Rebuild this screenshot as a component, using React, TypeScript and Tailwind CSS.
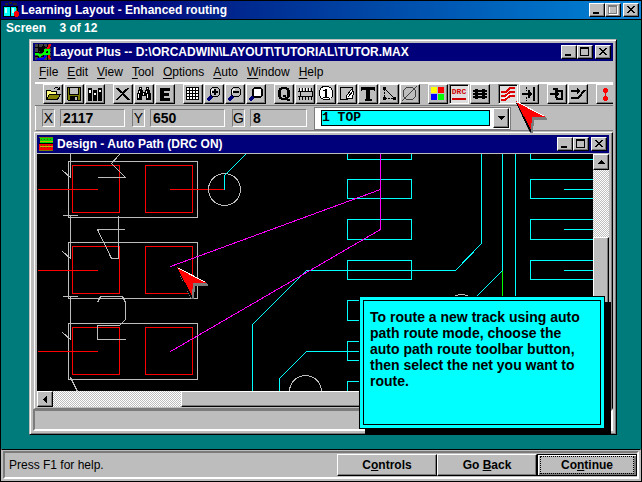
import type { ReactNode } from "react";

const raised =
  "border border-t-white border-l-white border-r-black border-b-black bg-[#bdbdbd] shadow-[inset_-1px_-1px_0_#7b7b7b]";
const pressed =
  "border border-t-[#7b7b7b] border-l-[#7b7b7b] border-r-white border-b-white bg-[#dedede] shadow-[inset_1px_1px_0_#000]";
const dither =
  "bg-[repeating-conic-gradient(#fff_0_25%,#bdbdbd_0_50%)] bg-[length:2px_2px]";

function WindowButtons({ dim = false }: { dim?: boolean }) {
  const cls = `h-[14px] w-4 ${raised}`;
  return (
    <div className="flex">
      <button aria-label="Minimize" className={cls}>
        <svg viewBox="0 0 14 12" className="block h-3 w-3.5" shapeRendering="crispEdges">
          <path d="M3 8h6v2H3z" />
        </svg>
      </button>
      <button aria-label="Maximize" className={cls}>
        <svg viewBox="0 0 14 12" className="block h-3 w-3.5" shapeRendering="crispEdges">
          {dim && <path d="M3.500 2.500h8v8h-8z" fill="none" stroke="#fff" />}
          <path d="M2.500 1.500h8v8h-8zM2 2.500h9" fill="none" stroke={dim ? "#7b7b7b" : "#000"} />
        </svg>
      </button>
      <button aria-label="Close" className={`ml-0.5 ${cls}`}>
        <svg viewBox="0 0 14 12" className="block h-3 w-3.5" shapeRendering="crispEdges">
          <path d="M3 2h2v1h1v1h2V3h1V2h2v1h-1v1H9v1H8v1h1v1h1v1h1v1H9V8H8V7H6v1H5v1H3V8h1V7h1V6h1V5H5V4H4V3H3z" />
        </svg>
      </button>
    </div>
  );
}

function Ico({ children }: { children: ReactNode }) {
  return (
    <svg viewBox="0 0 18 18" className="block h-[18px] w-[18px]" shapeRendering="crispEdges" fill="none" stroke="#000">
      {children}
    </svg>
  );
}

function Lens({ children }: { children?: ReactNode }) {
  return (
    <>
      <path d="M2.500 15.500l4-4" stroke="#00007b" strokeWidth="3" />
      <path d="M7.500 2.500h5l2 2v5l-2 2h-5l-2-2v-5z" fill="#bdbdbd" />
      <path d="M7 4.500h2M6.500 5v3" stroke="#fff" />
      {children}
    </>
  );
}

type Tool = { name: string; art: ReactNode; on?: boolean };

const groups: Tool[][] = [
  [
    {
      name: "Open",
      art: (
        <>
          <path d="M2.500 14.500v-9h4l1 1h5v3" fill="#ffff7b" />
          <path d="M2.500 14.500l3-5h11l-3 5z" fill="#848400" />
          <path d="M9.500 4.500l2-2h2l2 2M15.500 2v3M13 4.500h3" />
        </>
      ),
    },
    {
      name: "Save",
      art: (
        <>
          <path d="M2.500 2.500h13v13h-12l-1-1z" fill="#7b7b00" />
          <path d="M5 3h8v6H5z" fill="#bdbdbd" stroke="none" />
          <path d="M4.500 3v6.500h9V3" />
          <path d="M5 11h8v4H5z" fill="#000" stroke="none" />
          <path d="M10 12h2v3h-2z" fill="#bdbdbd" stroke="none" />
        </>
      ),
    },
    {
      name: "Library",
      art: (
        <>
          <path d="M2 3h4v13H2zM7 5h4v11H7zM12 3h4v13h-4z" fill="#000" stroke="none" />
          <path d="M3 5h2v3H3zM8 8h2v2H8zM13 5h2v2h-2z" fill="#fff" stroke="none" />
        </>
      ),
    },
  ],
  [
    {
      name: "Delete",
      art: <path d="M2 3h3v1h1v1h1v1h1v1h1V6h1V5h1V4h2V3h2v1h-1v1h-1v1h-1v1h-1v1h-1v1h1v1h1v1h1v1h1v1h1v1h1v1h-3v-1h-1v-1h-1v-1H10v-1H9v-1H8v1H7v1H6v1H5v1H4v1H2v-1h1v-1h1v-1h1v-1h1V10h1V9h1V8H6V7H5V6H4V5H3V4H2z" fill="#000" stroke="none" />,
    },
    {
      name: "Find",
      art: (
        <>
          <path d="M4 2h3v3h1v2h2V5h1V2h3v3h1v3h1v7h-5v-4H7v4H2V8h1V5h1z" fill="#000" stroke="none" />
          <path d="M4.500 6v2M3.500 9v4M11.500 6v2M12.500 9v4M5.500 3v1M12.500 3v1M8.500 8v2" stroke="#fff" />
        </>
      ),
    },
    { name: "Edit", art: <path d="M4 3h10v3H8v2h5v3H8v2h6v3H4z" fill="#000" stroke="none" /> },
  ],
  [
    {
      name: "Spreadsheet",
      art: (
        <>
          <path d="M2 2h13v13H2z" fill="#fff" stroke="none" />
          <path d="M2.500 2.500h12v12h-12zM2 5.500h13M2 8.500h13M2 11.500h13M5.500 2v13M8.500 2v13M11.500 2v13" />
        </>
      ),
    },
    { name: "Zoom in", art: <Lens><path d="M7 7h6M10 4v6" strokeWidth="2" /></Lens> },
    { name: "Zoom out", art: <Lens><path d="M7 7h6" strokeWidth="2" /></Lens> },
    {
      name: "Zoom all",
      art: (
        <Lens>
          <path d="M6.500 3.500h8v8h-8z" fill="#fff" />
          <path d="M7 2.500h7M5.500 4v7M15.500 4v7M7 12.500h7" />
        </Lens>
      ),
    },
  ],
  [
    {
      name: "Query",
      art: <path d="M6 2h6v1h2v2h1v7h-1v1h-1v1h2v2h-3v-1H6v-1H4v-2H3V5h1V3h2zM7 5H6v7h1v1h3v-1H8v-2h3v2h1V5h-1V4H7z" fill="#000" stroke="none" />,
    },
    {
      name: "Component",
      art: (
        <>
          <path d="M4 6.500h12v5H4v-1.500l1-1-1-1z" fill="#bdbdbd" />
          <path d="M3.500 3v3M6.500 3v3M9.500 3v3M12.500 3v3M15.500 3v3M3.500 12v3M6.500 12v3M9.500 12v3M12.500 12v3M15.500 12v3" />
          <path d="M2 6.500h3M2 11.500h3" />
          <path d="M4.500 3v3M7.500 3v3M10.500 3v3M13.500 3v3" stroke="#fff" />
        </>
      ),
    },
    {
      name: "Pin",
      art: (
        <>
          <path d="M6.500 1.500h5l3 2 1 3v5l-2 2-2 1h-5l-3-2-1-3v-4l2-3z" fill="#fff" />
          <path d="M8 4h2v8h2v1H6v-1h2V6H6V5h2z" fill="#000" stroke="none" />
        </>
      ),
    },
    {
      name: "Obstacle",
      art: (
        <>
          <path d="M2.500 2.500h12v5l-6 7h-6z" fill="#bdbdbd" />
          <path d="M8.500 14.500v-4l5-6 2 2-1 7h-4z" fill="#fff" />
          <path d="M10 12l5-6" />
        </>
      ),
    },
    { name: "Text", art: <path d="M2 2h14v4h-1V5h-4v9h2v2H6v-2h1V5H3v1H2z" fill="#000" stroke="none" /> },
    {
      name: "Connection",
      art: (
        <>
          <path d="M4.500 4v8M5 13.500h9" strokeDasharray="2 1" />
          <path d="M5 4l9 9" />
          <path d="M3 2h3v3H3zM3 12h3v3H3zM13 12h3v3h-3z" fill="#000" stroke="none" />
        </>
      ),
    },
    {
      name: "Error",
      art: (
        <path d="M5.500 2.500h6l3 3v6l-3 3h-6l-3-3v-6zM1 16L16 1" stroke="#424242" />
      ),
    },
  ],
  [
    {
      name: "Color",
      art: (
        <g stroke="none">
          <path d="M2 2h6v6H2z" fill="#ff0" />
          <path d="M9 2h6v6H9z" fill="#f00" />
          <path d="M2 9h6v6H2z" fill="#00f" />
          <path d="M9 9h6v6H9z" fill="#0f0" />
        </g>
      ),
    },
    {
      name: "Online DRC",
      on: true,
      art: (
        <>
          <text x="9" y="9" textAnchor="middle" fill="#d00000" stroke="none" className="font-['Liberation_Mono',monospace] text-[8px] font-bold">
            DRC
          </text>
          <path d="M2 14h14" stroke="#d00000" strokeWidth="2" />
        </>
      ),
    },
    {
      name: "Reconnect",
      art: (
        <>
          <path d="M2 6h14M2 9h14M2 12h14" strokeWidth="2" />
          <path d="M4 4h3v10H4zM11 4h3v10h-3zM7 5h4v8H7z" fill="#000" stroke="none" />
          <path d="M7 7.500h4M7 10.500h4" stroke="#bdbdbd" />
        </>
      ),
    },
  ],
  [
    {
      name: "Auto path route",
      on: true,
      art: (
        <>
          <path d="M2 7h5l4-4h5M2 11h4l5-4h5M2 15h4l5-4h5" stroke="#e00000" strokeWidth="2" />
          <path d="M3 13h3l4-4h3" stroke="#fff" />
        </>
      ),
    },
    {
      name: "Shove track",
      art: (
        <>
          <path d="M6.500 2v4M6.500 12v4" strokeDasharray="2 1" />
          <path d="M2 9h9" strokeWidth="2" />
          <path d="M8 5h2v2h1v1h1v2h-1v1h-1v2H8zM13 2h2v14h-2z" fill="#000" stroke="none" />
        </>
      ),
    },
  ],
  [
    {
      name: "Edit segment",
      art: (
        <>
          <path d="M5 4h4v2h5v8H9v-2" strokeWidth="2" />
          <path d="M2 9h7" strokeWidth="2" />
          <path d="M7 5h2v2h1v1h1v2h-1v1H9v2H7z" fill="#000" stroke="none" />
        </>
      ),
    },
    {
      name: "Add track",
      art: (
        <>
          <path d="M2 6h7M2 13h7l7-8" strokeWidth="2" />
          <path d="M8 3h1v1h1v1h1v2h-1v1H9v1H8z" fill="#000" stroke="none" />
        </>
      ),
    },
  ],
  [
    {
      name: "Refresh",
      art: (
        <path d="M7 3h3v1h1v3h-1v1H9v3h1v1h1v3h-1v1H7v-1H6v-3h1v-1h1V8H7V7H6V4h1z" fill="#f00" stroke="none" />
      ),
    },
  ],
];

function Readout({ id, value, width }: { id: string; value: string; width: string }) {
  const box = "h-[18px] border border-t-[#7b7b7b] border-l-[#7b7b7b] border-r-white border-b-white bg-[#bdbdbd]";
  return (
    <div className="flex gap-[5px]">
      <label htmlFor={id} className={`w-[13px] text-center text-sm leading-4 ${box}`}>
        {id}
      </label>
      <input id={id} readOnly defaultValue={value} className={`px-0.5 text-sm leading-4 font-bold outline-none ${width} ${box}`} />
    </div>
  );
}

const padRows = [139, 179, 219, 260, 300, 341, 381];

function Board() {
  return (
    <svg viewBox="37 154 556 237" className="block h-[237px] w-[556px] shrink-0" shapeRendering="crispEdges" fill="none" role="img" aria-label="Board layout">
      <g transform="translate(.5 .5)">
        {[0, 81, 162].map((dy) => (
          <g key={dy}>
            <path d={`M68 ${161 + dy}h129v56h-129z`} stroke="#bdbdbd" />
            <path d={`M72 ${165 + dy}h47v47h-47zM145 ${165 + dy}h47v47h-47zM37 ${189 + dy}h60`} stroke="#f00" />
            <path d={`M70 ${134 + dy}v43l-8 -7M62 ${134 + dy}h15`} stroke="#bdbdbd" />
          </g>
        ))}
        <path d="M169 189h55" stroke="#f00" />
        <path
          d="M119 154l-8 9l14 14h-28M124 229h-27l14 29h7v-43M97 302l3-6h22l3 6v17l-6 6h-22v14h28M70 377l7 14"
          stroke="#bdbdbd"
        />
        <g stroke="#bdbdbd">
          <circle cx="224" cy="189" r="16" />
          <circle cx="305" cy="391" r="16" />
          <circle cx="461" cy="310" r="16" />
        </g>
        <g stroke="#0ff">
          {padRows.map((y, i) => (
            <path key={y} d={`M347 ${y}h64v${i % 2 ? 19 : 20}h-64zM600 ${y}h-70v${i % 2 ? 19 : 20}h70`} />
          ))}
          <path d="M563 189h40M563 229h40M563 270h40" />
          <path d="M224 189v-14l22-22M252 391v-67l54-54h149l26-27v-90M279 391v-13l27-27h80M502 153v117l-30 30M515 153v160" />
        </g>
        <path d="M502 270v40" stroke="#0f0" />
        <path d="M380 153v76l-210 122M380 189l-210 77" stroke="#f0f" />
      </g>
    </svg>
  );
}

function RedArrow({ place }: { place: string }) {
  return (
    <svg viewBox="0 0 34 34" className={`pointer-events-none absolute h-[34px] w-[34px] ${place}`} shapeRendering="crispEdges" aria-hidden="true">
      <path d="M1 2l31 15v2H19l-1 13h-3z" fill="#7b7b7b" />
      <path d="M0 0l15 31h1V17z" fill="#000" />
      <path d="M1 0l29 15v1H17l-1 13z" fill="#f00" />
      <path d="M2 1l27 14" stroke="#fff" fill="none" />
    </svg>
  );
}

export default function App() {
  return (
    <div className="flex min-h-screen flex-col border border-black bg-[#007b7b] font-['Liberation_Sans',Arial,sans-serif] text-xs text-black">
      <header className="flex h-[19px] items-center border-b border-black bg-linear-to-r from-[#00007b] from-20% to-[#1084d6] pr-0.5 pl-0.5">
        <svg viewBox="0 0 16 16" className="mr-0.5 h-4 w-4" shapeRendering="crispEdges" aria-hidden="true">
          <path d="M2 1h3v2H2zM6 0h3v2H6zM10 1h4v2h-4z" fill="#222" />
          <path d="M0 4h15v11H0z" fill="#000" />
          <path d="M1 5h6v9H1zM8 5h5v9H8z" fill="#0ff" />
          <path d="M2 6h2v5H2zM9 6h2v5H9z" fill="#bff" />
          <path d="M12 9h3v1h1v4h-1v1h-3v-1h-1v-4h1z" fill="#f00" />
          <path d="M13 6h1v3h-1z" fill="#7b7b00" />
        </svg>
        <h1 className="flex-1 font-bold text-white">Learning Layout - Enhanced routing</h1>
        <WindowButtons dim />
      </header>

      <main className="flex-1 pr-6 pl-7">
        <p className="-ml-[23px] h-[19px] leading-4 font-bold whitespace-pre text-white">Screen{"    "}3 of 12</p>

        <section className="relative border border-t-[#bdbdbd] border-r-black border-b-black border-l-[#bdbdbd] bg-[#bdbdbd] p-[3px] shadow-[inset_1px_1px_0_#fff,inset_-1px_-1px_0_#7b7b7b]">
          <div className="flex h-[18px] items-center bg-[#00007b] pr-0.5 pl-0.5">
            <svg viewBox="0 0 16 16" className="mr-0.5 h-4 w-4" shapeRendering="crispEdges" fill="none" aria-hidden="true">
              <path d="M0 0h16v16H0z" fill="#424242" />
              <path d="M0 3.500h16M0 8.500h16M0 12.500h16M3.500 0v16M8.500 0v16M12.500 0v16" stroke="#000" />
              <path d="M2 3h5l1-2 2 1v5l-4 2z" fill="#000" />
              <path d="M15.500 0l-3 5M13 10l2 5" stroke="#f00" strokeWidth="2" />
              <path d="M0 10h3l2 2 4-3" stroke="#0f0" strokeWidth="2" />
              <circle cx="12" cy="8" r="2.500" stroke="#0f0" strokeWidth="2" />
              <path d="M2 15h6l3-3" stroke="#00f" strokeWidth="2" />
            </svg>
            <h2 className="flex-1 font-bold text-white">Layout Plus -- D:\ORCADWIN\LAYOUT\TUTORIAL\TUTOR.MAX</h2>
            <WindowButtons />
          </div>

          <nav className="flex h-[21px] items-center gap-[9px] pl-1.5">
            {["File", "Edit", "View", "Tool", "Options", "Auto", "Window", "Help"].map((m) => (
              <button key={m}>
                <span className="underline underline-offset-2">{m[0]}</span>
                {m.slice(1)}
              </button>
            ))}
          </nav>

          <div className="ml-0.5 flex gap-2 overflow-hidden border-t-2 border-b border-t-white border-b-[#7b7b7b] pb-px pl-2">
            {groups.map((g) => (
              <div key={g[0].name} className="flex shrink-0 gap-px">
                {g.map((t) => (
                  <button key={t.name} aria-label={t.name} className={`h-5 w-5 ${t.on ? pressed : raised}`}>
                    <Ico>{t.art}</Ico>
                  </button>
                ))}
              </div>
            ))}
          </div>

          <div className="ml-0.5 flex h-[25px] items-center gap-[7px] border-b border-l border-b-[#7b7b7b] border-l-white pl-1.5">
            <Readout id="X" value="2117" width="w-[65px]" />
            <Readout id="Y" value="650" width="w-[75px]" />
            <Readout id="G" value="8" width="w-[57px]" />
            <div className="flex h-[23px] w-[197px] items-center justify-between border border-[#7b7b7b] bg-white pr-px pl-1.5">
              <select aria-label="Layer" className="h-4 w-[169px] appearance-none border border-black bg-[#0ff] font-['Liberation_Mono',monospace] text-[13px] leading-[14px] font-bold">
                <option>1 TOP</option>
              </select>
              <button aria-label="Show layers" className={`flex h-5 w-4 items-center justify-center ${raised}`}>
                <svg viewBox="0 0 7 4" className="h-1 w-[7px]" shapeRendering="crispEdges">
                  <path d="M0 0h7v1H6v1H5v1H4v1H3V3H2V2H1V1H0z" />
                </svg>
              </button>
            </div>
          </div>

          <div className="mt-px ml-px border border-t-white border-r-black border-b-[#7b7b7b] border-l-white p-0.5 pr-[3px] pb-px shadow-[inset_-1px_0_0_#7b7b7b]">
            <div className="flex h-[19px] items-center border-b border-[#bdbdbd] bg-[#00007b] pr-0.5 pl-0.5">
              <svg viewBox="0 0 16 16" className="mr-0.5 h-4 w-4" shapeRendering="crispEdges" aria-hidden="true">
                <path d="M1 2h13v5H1z" fill="#0d0" />
                <path d="M0 8h14v6H0z" fill="#f00" />
                <path d="M2.500 3v10M5.500 3v10M8.500 3v10M11.500 3v10" stroke="#7b3b00" strokeDasharray="1 1" />
                <path d="M1 5h13v1H1zM1 10h13v1H1z" fill="#bdbd00" />
                <path d="M0 7h14v1H0z" fill="#000" />
                <path d="M0 1h14v1H0zM0 14h14v1H0z" fill="#7b7b00" />
              </svg>
              <h3 className="flex-1 font-bold text-white">Design - Auto Path (DRC ON)</h3>
              <WindowButtons />
            </div>
            <div className="flex">
              <div className="flex min-w-0 flex-1 overflow-hidden bg-black">
                <Board />
              </div>
              <div className={`flex w-4 flex-col ${dither}`}>
                <button aria-label="Scroll up" className={`flex h-4 items-center justify-center ${raised}`}>
                  <svg viewBox="0 0 7 4" className="h-1 w-[7px]" shapeRendering="crispEdges">
                    <path d="M3 0h1v1h1v1h1v1h1v1H0V3h1V2h1V1h1z" />
                  </svg>
                </button>
                <div className={`mt-[67px] flex-1 ${raised}`} />
              </div>
            </div>
            <div className={`flex h-4 ${dither}`}>
              <button aria-label="Scroll left" className={`flex w-4 items-center justify-center ${raised}`}>
                <svg viewBox="0 0 4 7" className="h-[7px] w-1" shapeRendering="crispEdges">
                  <path d="M3 0h1v7H3V6H2V5H1V4H0V3h1V2h1V1h1z" />
                </svg>
              </button>
              <div className={`ml-32 flex-1 ${raised}`} />
            </div>
          </div>

          <div className="h-[22px] border-2 border-t-[#7b7b7b] border-r-white border-b-white border-l-[#7b7b7b]" />

          <RedArrow place="left-[485px] top-[61px]" />
          <RedArrow place="left-[146px] top-[227px]" />

          <div role="dialog" aria-label="Hint" className="absolute top-64 left-[329px] border border-black bg-[#0ff] p-[3px] shadow-[6px_6px_0_#000]">
            <p className="h-[125px] w-[238px] border border-black px-1.5 py-2 text-sm leading-4 font-bold">
              To route a new track using auto path route mode, choose the auto path route toolbar button, then select the net you want to route.
            </p>
          </div>
        </section>
      </main>

      <footer className="flex h-8 border border-t-black border-r-[#bdbdbd] border-b-[#bdbdbd] border-l-[#bdbdbd] bg-[#bdbdbd] p-px">
        <div className="flex flex-1 items-center border-2 border-t-[#7b7b7b] border-r-white border-b-white border-l-[#7b7b7b] pl-1">
          <p className="flex-1">Press F1 for help.</p>
          <button className={`h-[22px] w-[100px] font-bold ${raised}`}>
            C<u>o</u>ntrols
          </button>
          <button className={`h-[22px] w-[100px] font-bold ${raised}`}>
            Go <u>B</u>ack
          </button>
          <button className="h-[22px] w-[100px] border border-black bg-[#bdbdbd] p-px font-bold shadow-[inset_1px_1px_0_#fff,inset_-2px_-2px_0_#7b7b7b]">
            <span className="mx-px block border border-dotted border-black leading-4">
              Co<u>n</u>tinue
            </span>
          </button>
        </div>
      </footer>
    </div>
  );
}
